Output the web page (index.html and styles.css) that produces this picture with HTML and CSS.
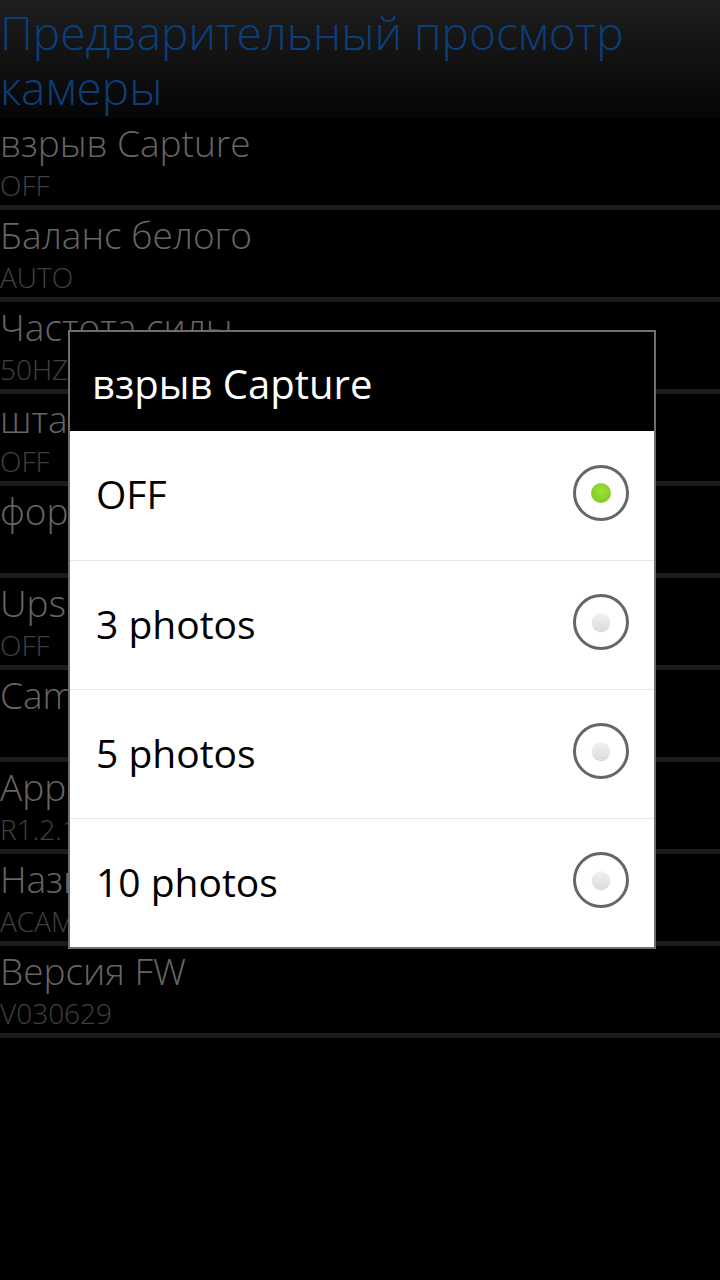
FILE: index.html
```html
<!doctype html>
<html lang="ru">
<head>
    <meta charset="UTF-8">
    <meta name="viewport" content="width=device-width, initial-scale=1.0">
    <title>Предварительный просмотр камеры</title>
    <link rel="stylesheet" href="styles.css">
</head>
<body>
<div class="settingsScreen">
    <div class="screenHeader">Предварительный просмотр камеры</div>
    <div class="prefList">
        <div class="prefItem"><div class="prefTitle">взрыв Capture</div><div class="prefSummary">OFF</div></div>
        <div class="prefItem"><div class="prefTitle">Баланс белого</div><div class="prefSummary">AUTO</div></div>
        <div class="prefItem"><div class="prefTitle">Частота силы</div><div class="prefSummary">50HZ</div></div>
        <div class="prefItem"><div class="prefTitle">штамп даты</div><div class="prefSummary">OFF</div></div>
        <div class="prefItem"><div class="prefTitle">формат</div><div class="prefSummary"></div></div>
        <div class="prefItem"><div class="prefTitle">Upside down</div><div class="prefSummary">OFF</div></div>
        <div class="prefItem"><div class="prefTitle">Camera</div><div class="prefSummary"></div></div>
        <div class="prefItem"><div class="prefTitle">App</div><div class="prefSummary">R1.2.1</div></div>
        <div class="prefItem"><div class="prefTitle">Название</div><div class="prefSummary">ACAM</div></div>
        <div class="prefItem"><div class="prefTitle">Версия FW</div><div class="prefSummary">V030629</div></div>
    </div>
</div>

<div class="dialogShade">
    <div class="choiceDialog">
        <div class="dialogTitle">взрыв Capture</div>
        <div class="choiceList">
            <div class="choiceRow checked"><span class="choiceLabel">OFF</span><span class="radio"><span class="dot"></span></span></div>
            <div class="choiceRow"><span class="choiceLabel">3 photos</span><span class="radio"><span class="dot"></span></span></div>
            <div class="choiceRow"><span class="choiceLabel">5 photos</span><span class="radio"><span class="dot"></span></span></div>
            <div class="choiceRow"><span class="choiceLabel">10 photos</span><span class="radio"><span class="dot"></span></span></div>
        </div>
    </div>
</div>
</body>
</html>
```

FILE: styles.css
```css
body {
    margin: 0;
    height: 1280px;
    background: #000;
    font-family: "Open Sans", "DejaVu Sans", sans-serif;
    overflow: hidden;
}

.screenHeader {
    height: 118px;
    box-sizing: border-box;
    padding-top: 5px;
    font-size: 46px;
    font-weight: 300;
    line-height: 55px;
    color: #0b3f7c;
    background: linear-gradient(#1e1e1e, #050505);
}

.prefItem {
    height: 87px;
    border-bottom: 5px solid #1b1b1b;
    white-space: nowrap;
    overflow: hidden;
}

.prefTitle {
    font-size: 37px;
    font-weight: 300;
    line-height: 49px;
    color: #666;
}

.prefSummary {
    font-size: 28px;
    font-weight: 300;
    line-height: 36px;
    color: #404040;
}

.dialogShade {
    position: absolute;
    left: 0;
    top: 0;
    width: 720px;
    height: 1280px;
}

.choiceDialog {
    position: absolute;
    left: 68px;
    top: 330px;
    width: 584px;
    border: 2px solid #6e6e6e;
    background: #000;
}

.dialogTitle {
    height: 99px;
    box-sizing: border-box;
    padding: 26px 0 0 22px;
    font-size: 40px;
    line-height: 52px;
    color: #fff;
}

.choiceList {
    background: #fff;
}

.choiceRow {
    display: flex;
    align-items: center;
    justify-content: space-between;
    height: 128px;
    padding: 0 25px 0 26px;
    border-top: 1px solid #e8e8e8;
    font-size: 39px;
    color: #000;
}

.choiceRow:first-child {
    border-top: none;
    height: 129px;
}

.choiceLabel {
    margin-top: -4px;
}

.radio {
    display: flex;
    align-items: center;
    justify-content: center;
    width: 50px;
    height: 50px;
    margin-top: -6px;
    border: 3px solid #666;
    border-radius: 50%;
    background: #fff;
}

.dot {
    width: 18px;
    height: 18px;
    border-radius: 50%;
    background: linear-gradient(#f2f2f2, #dcdcdc);
    box-shadow: 0 1px 1px #c8c8c8;
}

.checked .dot {
    width: 20px;
    height: 20px;
    background: radial-gradient(circle at 50% 40%, #9be23a, #7cc21c);
    box-shadow: none;
}
```
